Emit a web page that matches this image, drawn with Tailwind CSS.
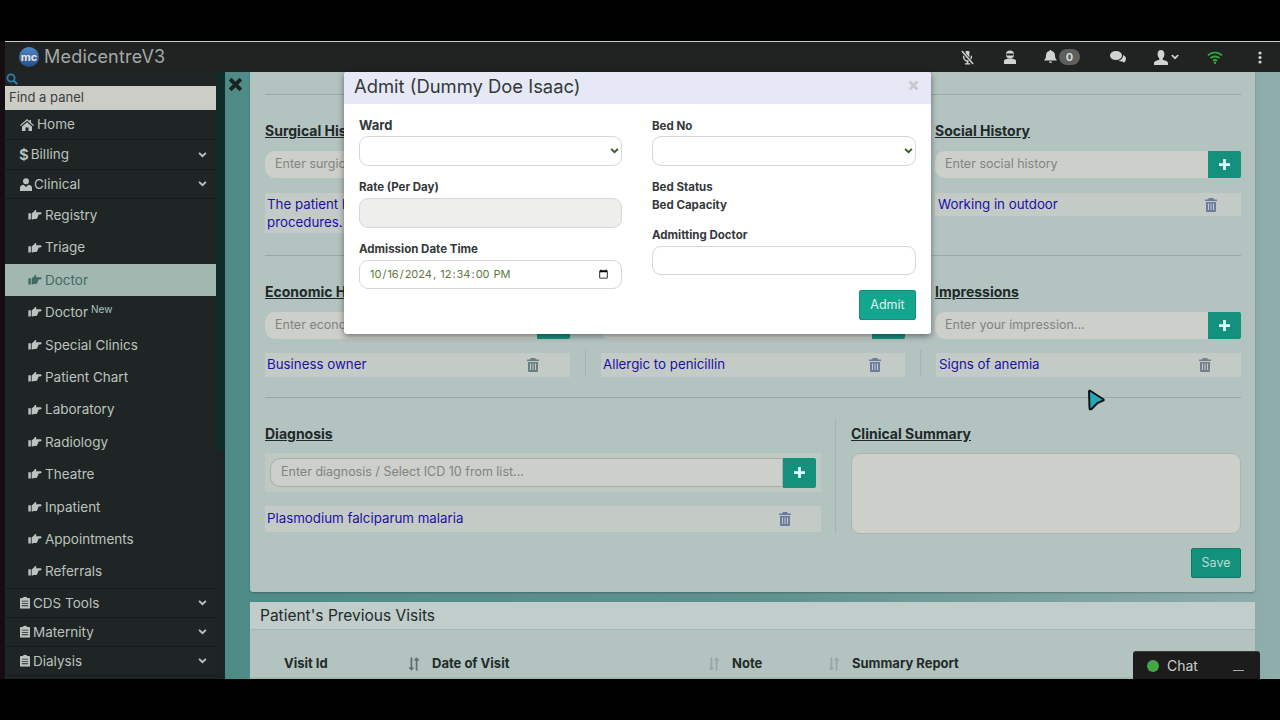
<!DOCTYPE html>
<html lang="en">
<head>
  <meta charset="UTF-8">
  <title>MedicentreV3 - Doctor</title>
  <script src="https://cdn.jsdelivr.net/npm/@tailwindcss/browser@4"></script>
</head>
<body class="bg-black">
<svg class="hidden">
  <symbol id="hand" viewBox="0 0 16 12"><path fill="currentColor" d="M0 4h3v7.500H0zM4 4.200 7 1.600c.5-.6.700-1.600 1.500-1.600.9 0 1.300.8 1 1.700l-.4 1h5.200c.9 0 1.600.6 1.600 1.300 0 .8-.7 1.300-1.600 1.300h-2.200c.3.900 0 1.600-.6 1.900.2.800-.1 1.500-.7 1.800.1 1-.5 1.700-1.500 1.700H6.200C5.300 11.700 4.700 11.300 4 11z"/></symbol>
  <symbol id="chev" viewBox="0 0 10 7"><path fill="none" stroke="currentColor" stroke-width="2.200" d="M1 1l4 4 4-4"/></symbol>
  <symbol id="clip" viewBox="0 0 11 14"><path fill="currentColor" fill-rule="evenodd" d="M1 2h2.500V1h1.200a1 1 0 0 1 1.600 0h1.200v1H10a1 1 0 0 1 1 1v10a1 1 0 0 1-1 1H1a1 1 0 0 1-1-1V3a1 1 0 0 1 1-1zM2 5v1h7V5zm0 2.500v1h7v-1zM2 10v1h7v-1z"/></symbol>
  <symbol id="trash" viewBox="0 0 12 14"><path fill="currentColor" fill-rule="evenodd" d="M4 0h4l1 1.500h3V3H0V1.500h3zM1 4h10v9a1 1 0 0 1-1 1H2a1 1 0 0 1-1-1zm2 1.500V12h1V5.500zm2.500 0V12h1V5.500zm2.500 0V12h1V5.500z"/></symbol>
  <symbol id="plus" viewBox="0 0 12 12"><path fill="currentColor" d="M4.500 0h3v4.500H12v3H7.500V12h-3V7.500H0v-3h4.500z"/></symbol>
  <symbol id="sort" viewBox="0 0 14 16"><path fill="currentColor" d="M3 0h2v12h2.500L4 16 .5 12H3zM9 16h2V4h2.500L10 0 6.500 4H9z"/></symbol>
</svg>

<div class="relative h-[720px] w-[1280px] overflow-hidden font-[Inter,sans-serif]">
  <div class="h-[41px] bg-black"></div>

  <div class="flex h-[638px] flex-col overflow-hidden bg-[#160c14] pl-[5px]">
    <!-- top bar -->
    <header class="flex h-[31px] shrink-0 items-center border-t border-[#c9c9c9] bg-[#202322]">
      <div class="ml-[14px] flex h-[20px] w-[20px] items-center justify-center rounded-full bg-linear-to-b from-[#4f86c8] to-[#23508f] text-[11px] font-bold leading-none text-[#ece4da]">mc</div>
      <span class="ml-[5px] text-[18px] leading-none tracking-[0.2px] text-[#a3aaa8]">MedicentreV3</span>
      <div class="ml-auto flex h-full items-center pr-[18px] text-[#cfd3d1]">
        <svg class="h-[15px] w-[15px]" viewBox="0 0 16 16"><path fill="currentColor" d="M6 1h4v7H6zM3 6h1.500c0 3 1.500 5 3.500 5s3.500-2 3.500-5H13c0 3.500-1.800 6-4.200 6.400V14h2v1.500H5.200V14h2v-1.600C4.800 12 3 9.500 3 6z"/><path stroke="#202322" stroke-width="3" d="M2 1l12 14"/><path stroke="currentColor" stroke-width="1.600" d="M2 1l12 14"/></svg>
        <svg class="ml-[28px] h-[15px] w-[14px]" viewBox="0 0 14 15"><circle cx="7" cy="4.500" r="4" fill="currentColor"/><path fill="#202322" d="M3.500 3.500h7v2h-7z"/><path fill="currentColor" d="M1 11c0-1.500 2-2.500 6-2.500s6 1 6 2.500v3H1z"/></svg>
        <svg class="ml-[27px] h-[14px] w-[13px]" viewBox="0 0 13 14"><path fill="currentColor" d="M6.500 0c.6 0 1 .4 1 1 2.300.4 3.500 2.200 3.500 4.500 0 2.800 1 3.800 2 5H0c1-1.200 2-2.200 2-5C2 3.200 3.200 1.400 5.500 1c0-.6.400-1 1-1zM5 11.500h3a1.500 1.500 0 0 1-3 0z"/></svg>
        <span class="ml-[2px] flex h-[16px] w-[21px] items-center justify-center rounded-full bg-[#5e5f5e] text-[11px] font-bold text-[#d7d9d7]">0</span>
        <svg class="ml-[30px] h-[13px] w-[16px]" viewBox="0 0 16 13"><ellipse cx="6" cy="4.500" rx="6" ry="4.500" fill="currentColor"/><path fill="currentColor" d="M8 10c3 .5 5 0 5.800 1.800 1-.6 2.200-2.200 2.200-4 0-2-1.200-3-2.800-3.800C13 7 11 9.500 8 10z"/></svg>
        <svg class="ml-[28px] h-[15px] w-[14px]" viewBox="0 0 14 15"><path fill="currentColor" d="M7 0c2 0 3.400 1.500 3.400 4s-1 3.800-1.700 4.500v1.300c1.500.6 5.300 1.200 5.300 3.200v2H0v-2c0-2 3.800-2.600 5.300-3.200V8.500C4.600 7.800 3.600 6.500 3.600 4S5 0 7 0z"/></svg>
        <svg class="ml-[3px] h-[6px] w-[8px]" viewBox="0 0 10 7"><use href="#chev"/></svg>
        <svg class="ml-[28px] h-[13px] w-[16px] text-[#2fae3a]" viewBox="0 0 16 13"><path fill="none" stroke="currentColor" stroke-width="1.700" d="M1 4.500c4-4 10-4 14 0M3.500 7.200c2.500-2.500 6.500-2.500 9 0M6 9.800c1.200-1.100 2.800-1.100 4 0"/><circle cx="8" cy="11.700" r="1.200" fill="currentColor"/></svg>
        <svg class="ml-[35px] h-[13px] w-[4px]" viewBox="0 0 4 13"><circle cx="2" cy="2" r="1.600" fill="currentColor"/><circle cx="2" cy="6.500" r="1.600" fill="currentColor"/><circle cx="2" cy="11" r="1.600" fill="currentColor"/></svg>
      </div>
    </header>

    <div class="flex min-h-0 flex-1">
      <!-- sidebar -->
      <aside class="w-[211px] shrink-0 bg-[#1f2524] text-[13.500px] text-[#bcc2bf]">
        <div class="flex h-[14px] items-center pl-[1px]">
          <svg class="h-[12px] w-[12px] text-[#2f7fa6]" viewBox="0 0 12 12"><circle cx="5" cy="5" r="3.600" fill="none" stroke="currentColor" stroke-width="1.800"/><path stroke="currentColor" stroke-width="2" d="M7.800 7.800l3.500 3.500"/></svg>
        </div>
        <div class="flex h-[24px] items-center bg-[#cdcdc8] pl-[4px] text-[13px] text-[#3c3e3c]">Find a panel</div>
        <div class="flex h-[30px] items-center border-b border-[#171c1b] pl-[15px]">
          <svg class="h-[12px] w-[14px]" viewBox="0 0 14 12"><path fill="currentColor" d="M7 0l2.500 2.200V1H11v2.600L14 6.200l-.8.9L7 1.700.8 7.100 0 6.200zM2 7.500l5-4.300 5 4.300V12H8.500V8.500h-3V12H2z"/></svg>
          <span class="ml-[3px]">Home</span>
        </div>
        <div class="flex h-[30px] items-center border-b border-[#171c1b] pl-[14px]">
          <span class="text-[15px] font-semibold leading-none">$</span><span class="ml-[2px]">Billing</span>
          <svg class="ml-auto mr-[9px] h-[6px] w-[9px]" viewBox="0 0 10 7"><use href="#chev"/></svg>
        </div>
        <div class="flex h-[29px] items-center border-b border-[#171c1b] pl-[15px]">
          <svg class="h-[13px] w-[12px]" viewBox="0 0 12 13"><circle cx="6" cy="3.200" r="3" fill="currentColor"/><path fill="currentColor" d="M0 13V9.500C0 8 2 7 3.500 6.800L6 9l2.500-2.200C10 7 12 8 12 9.500V13z"/></svg>
          <span class="ml-[2px]">Clinical</span>
          <svg class="ml-auto mr-[9px] h-[6px] w-[9px]" viewBox="0 0 10 7"><use href="#chev"/></svg>
        </div>
        <nav>
          <div class="flex h-[32.400px] items-center pl-[23px]"><svg class="h-[10px] w-[14px]"><use href="#hand"/></svg><span class="ml-[3px]">Registry</span></div>
          <div class="flex h-[32.400px] items-center pl-[23px]"><svg class="h-[10px] w-[14px]"><use href="#hand"/></svg><span class="ml-[3px]">Triage</span></div>
          <div class="flex h-[32.400px] items-center bg-[#a2b7af] pl-[23px] text-[#3f6b66]"><svg class="h-[10px] w-[14px]"><use href="#hand"/></svg><span class="ml-[3px]">Doctor</span></div>
          <div class="flex h-[32.400px] items-center pl-[23px]"><svg class="h-[10px] w-[14px]"><use href="#hand"/></svg><span class="ml-[3px]">Doctor</span><span class="mb-[6px] ml-[3px] text-[10px] text-[#a9c4c0]">New</span></div>
          <div class="flex h-[32.400px] items-center pl-[23px]"><svg class="h-[10px] w-[14px]"><use href="#hand"/></svg><span class="ml-[3px]">Special Clinics</span></div>
          <div class="flex h-[32.400px] items-center pl-[23px]"><svg class="h-[10px] w-[14px]"><use href="#hand"/></svg><span class="ml-[3px]">Patient Chart</span></div>
          <div class="flex h-[32.400px] items-center pl-[23px]"><svg class="h-[10px] w-[14px]"><use href="#hand"/></svg><span class="ml-[3px]">Laboratory</span></div>
          <div class="flex h-[32.400px] items-center pl-[23px]"><svg class="h-[10px] w-[14px]"><use href="#hand"/></svg><span class="ml-[3px]">Radiology</span></div>
          <div class="flex h-[32.400px] items-center pl-[23px]"><svg class="h-[10px] w-[14px]"><use href="#hand"/></svg><span class="ml-[3px]">Theatre</span></div>
          <div class="flex h-[32.400px] items-center pl-[23px]"><svg class="h-[10px] w-[14px]"><use href="#hand"/></svg><span class="ml-[3px]">Inpatient</span></div>
          <div class="flex h-[32.400px] items-center pl-[23px]"><svg class="h-[10px] w-[14px]"><use href="#hand"/></svg><span class="ml-[3px]">Appointments</span></div>
          <div class="flex h-[32.400px] items-center pl-[23px]"><svg class="h-[10px] w-[14px]"><use href="#hand"/></svg><span class="ml-[3px]">Referrals</span></div>
        </nav>
        <div class="flex h-[30px] items-center border-y border-[#171c1b] pl-[15px]">
          <svg class="h-[13px] w-[10px]" viewBox="0 0 11 14"><use href="#clip"/></svg><span class="ml-[3px]">CDS Tools</span>
          <svg class="ml-auto mr-[9px] h-[6px] w-[9px]" viewBox="0 0 10 7"><use href="#chev"/></svg>
        </div>
        <div class="flex h-[29px] items-center border-b border-[#171c1b] pl-[15px]">
          <svg class="h-[13px] w-[10px]" viewBox="0 0 11 14"><use href="#clip"/></svg><span class="ml-[3px]">Maternity</span>
          <svg class="ml-auto mr-[9px] h-[6px] w-[9px]" viewBox="0 0 10 7"><use href="#chev"/></svg>
        </div>
        <div class="flex h-[29px] items-center border-b border-[#171c1b] pl-[15px]">
          <svg class="h-[13px] w-[10px]" viewBox="0 0 11 14"><use href="#clip"/></svg><span class="ml-[3px]">Dialysis</span>
          <svg class="ml-auto mr-[9px] h-[6px] w-[9px]" viewBox="0 0 10 7"><use href="#chev"/></svg>
        </div>
      </aside>

      <div class="flex w-[9px] shrink-0 flex-col">
        <div class="h-[378px] bg-[#0f2c29]"></div>
        <div class="flex-1 bg-[#1c2322]"></div>
      </div>

      <!-- page -->
      <main class="flex min-w-0 flex-1 bg-linear-to-r from-[#4e8b87] via-[#5f918e] to-[#90aeab]">
        <div class="w-[25px] shrink-0 pt-[5px] pl-[3px]">
          <svg class="h-[15px] w-[15px] text-[#1a2423]" viewBox="0 0 14 14"><path fill="none" stroke="currentColor" stroke-width="3.600" d="M2 2l10 10M12 2L2 12"/></svg>
        </div>
        <div class="w-[1005px] shrink-0">
          <section class="h-[520px] rounded-b-[3px] bg-[#b3c3bf] pl-[15px] pr-[14px] shadow-[0_1px_2px_rgba(0,0,0,0.25)]">
            <div class="h-[23px] border-b border-[#97aaa6]"></div>

            <div class="grid grid-cols-[320px_335px_321px]">
              <div class="pr-[15px]">
                <h3 class="mt-[26px] h-[20px] text-[14px] font-bold leading-[20px] text-[#20292a] underline">Surgical History</h3>
                <div class="mt-[10px] flex h-[27px]">
                  <div class="flex flex-1 items-center rounded-l-[10px] bg-[#cdcfca] pl-[10px] text-[12.500px] text-[#7e8583]">Enter surgical history</div>
                  <div class="flex w-[33px] items-center justify-center rounded-r-[2px] bg-[#14917d] text-[#dff]"><svg class="h-[11px] w-[11px]"><use href="#plus"/></svg></div>
                </div>
                <div class="mt-[15px] h-[40px] bg-[#c4cbc6] px-[2px] pt-[2px] text-[13.300px] leading-[18px] text-[#1d0fa6]">The patient has no prior<br>procedures.</div>
              </div>
              <div class="px-[15px]"></div>
              <div class="pl-[15px]">
                <h3 class="mt-[26px] h-[20px] text-[14px] font-bold leading-[20px] text-[#20292a] underline">Social History</h3>
                <div class="mt-[10px] flex h-[27px]">
                  <div class="flex flex-1 items-center rounded-l-[10px] bg-[#cdcfca] pl-[10px] text-[12.500px] text-[#7e8583]">Enter social history</div>
                  <div class="flex w-[33px] items-center justify-center rounded-r-[2px] bg-[#14917d] text-[#dff]"><svg class="h-[11px] w-[11px]"><use href="#plus"/></svg></div>
                </div>
                <div class="mt-[15px] flex h-[23px] items-center justify-between bg-[#c4cbc6] pl-[3px] pr-[24px] text-[13.300px] text-[#1d0fa6]">Working in outdoor<svg class="h-[14px] w-[12px] text-[#6d7aa0]" viewBox="0 0 12 14"><use href="#trash"/></svg></div>
              </div>
            </div>
            <div class="mt-[22px] h-px bg-[#97aaa6]"></div>

            <div class="grid grid-cols-[320px_335px_321px]">
              <div class="pr-[15px]">
                <h3 class="mt-[26px] h-[20px] text-[14px] font-bold leading-[20px] text-[#20292a] underline">Economic History</h3>
                <div class="mt-[10px] flex h-[27px]">
                  <div class="flex flex-1 items-center rounded-l-[10px] bg-[#cdcfca] pl-[10px] text-[12.500px] text-[#7e8583]">Enter economic history</div>
                  <div class="flex w-[33px] items-center justify-center rounded-r-[2px] bg-[#14917d]"></div>
                </div>
                <div class="mt-[14px] flex h-[24px] items-center justify-between bg-[#c4cbc6] pl-[2px] pr-[31px] text-[13.300px] text-[#1d0fa6]">Business owner<svg class="h-[14px] w-[12px] text-[#66807f]" viewBox="0 0 12 14"><use href="#trash"/></svg></div>
              </div>
              <div class="px-[15px]">
                <div class="mt-[46px] h-[10px]"></div>
                <div class="flex h-[27px]">
                  <div class="flex-1 rounded-l-[10px] bg-[#cdcfca]"></div>
                  <div class="w-[33px] rounded-r-[2px] bg-[#14917d]"></div>
                </div>
                <div class="-ml-[15px] mt-[11px] border-l border-[#a3b5b1] pl-[15px] pt-[3px]">
                  <div class="flex h-[24px] items-center justify-between bg-[#c4cbc6] pl-[2px] pr-[24px] text-[13.300px] text-[#1d0fa6]">Allergic to penicillin<svg class="h-[14px] w-[12px] text-[#6d7aa0]" viewBox="0 0 12 14"><use href="#trash"/></svg></div>
                </div>
              </div>
              <div class="pl-[15px]">
                <h3 class="mt-[26px] h-[20px] text-[14px] font-bold leading-[20px] text-[#20292a] underline">Impressions</h3>
                <div class="mt-[10px] flex h-[27px]">
                  <div class="flex flex-1 items-center rounded-l-[10px] bg-[#cdcfca] pl-[10px] text-[12.500px] text-[#7e8583]">Enter your impression...</div>
                  <div class="flex w-[33px] items-center justify-center rounded-r-[2px] bg-[#14917d] text-[#dff]"><svg class="h-[11px] w-[11px]"><use href="#plus"/></svg></div>
                </div>
                <div class="-ml-[15px] mt-[11px] border-l border-[#a3b5b1] pl-[15px] pt-[3px]">
                  <div class="flex h-[24px] items-center justify-between bg-[#c4cbc6] pl-[3px] pr-[30px] text-[13.300px] text-[#1d0fa6]">Signs of anemia<svg class="h-[14px] w-[12px] text-[#777f8c]" viewBox="0 0 12 14"><use href="#trash"/></svg></div>
                </div>
              </div>
            </div>
            <div class="mt-[20px] h-px bg-[#97aaa6]"></div>

            <div class="mt-[20px] flex h-[115px]">
              <div class="w-[571px] border-r border-[#a3b5b1] pr-[14px]">
                <h3 class="mt-[6px] h-[20px] text-[14px] font-bold leading-[20px] text-[#20292a] underline">Diagnosis</h3>
                <div class="mt-[9px] flex h-[39px] items-center bg-[#bfc9c4] pl-[5px] pr-[5px]">
                  <div class="flex h-[29px] flex-1 items-center rounded-l-[10px] border border-[#a9aea6] bg-[#cdcfca] pl-[10px] text-[12.500px] text-[#7e8583]">Enter diagnosis / Select ICD 10 from list...</div>
                  <div class="flex h-[30px] w-[33px] items-center justify-center rounded-r-[2px] bg-[#14917d] text-[#dff]"><svg class="h-[11px] w-[11px]"><use href="#plus"/></svg></div>
                </div>
                <div class="mt-[14px] flex h-[26px] items-center justify-between bg-[#c4cbc6] pl-[2px] pr-[30px] text-[13.300px] text-[#1d0fa6]">Plasmodium falciparum malaria<svg class="h-[14px] w-[12px] text-[#6d7aa0]" viewBox="0 0 12 14"><use href="#trash"/></svg></div>
              </div>
              <div class="flex-1 pl-[15px]">
                <h3 class="mt-[6px] h-[20px] text-[14px] font-bold leading-[20px] text-[#20292a] underline">Clinical Summary</h3>
                <div class="mt-[9px] h-[81px] rounded-[9px] border border-[#adb5af] bg-[#cdcfca]"></div>
              </div>
            </div>
            <div class="mt-[15px] flex justify-end">
              <button class="flex h-[30px] w-[50px] items-center justify-center rounded-[2px] border border-[#127866] bg-[#14917d] text-[12.500px] text-[#b9dcd4]">Save</button>
            </div>
          </section>

          <section class="mt-[10px] h-[120px] rounded-t-[3px] bg-[#b3c3bf]">
            <div class="flex h-[28px] items-center border-b border-[#a4b8b4] bg-[#c0cdcb] pl-[10px] text-[15.500px] text-[#232a2a]">Patient's Previous Visits</div>
            <div class="mt-[21px] flex h-[28px] items-center border-b-2 border-[#a7b5b1] pl-[34px] text-[13px] font-bold text-[#232b2a]">
              <span class="w-[124px]">Visit Id</span>
              <svg class="h-[14px] w-[12px] text-[#5f6d6b]" viewBox="0 0 14 16"><use href="#sort"/></svg>
              <span class="ml-[12px] w-[276px]">Date of Visit</span>
              <svg class="h-[14px] w-[12px] text-[#97a7a4]" viewBox="0 0 14 16"><use href="#sort"/></svg>
              <span class="ml-[12px] w-[96px]">Note</span>
              <svg class="h-[14px] w-[12px] text-[#97a7a4]" viewBox="0 0 14 16"><use href="#sort"/></svg>
              <span class="ml-[12px]">Summary Report</span>
            </div>
          </section>
        </div>
      </main>
    </div>
  </div>

  <!-- admit modal -->
  <div class="absolute left-[344px] top-[72px] h-[262px] w-[587px] overflow-hidden rounded-[3px] bg-white shadow-[0_2px_6px_rgba(0,0,0,0.45)]">
    <div class="flex h-[32px] items-center justify-between bg-[#e6e8f6] pb-[3px] pl-[10px] pr-[12px]">
      <span class="text-[18.400px] text-[#33393a]">Admit (Dummy Doe Isaac)</span>
      <svg class="mb-[3px] h-[11px] w-[11px] text-[#c7c9cf]" viewBox="0 0 14 14"><path fill="none" stroke="currentColor" stroke-width="3.600" d="M2 2l10 10M12 2L2 12"/></svg>
    </div>
    <div class="grid grid-cols-[263px_264px] gap-x-[30px] pl-[15px]">
      <div>
        <label class="mt-[11px] block h-[20px] text-[13px] font-bold leading-[20px] text-[#33383a]">Ward</label>
        <div class="relative mt-[1px]">
          <select class="block h-[30px] w-full appearance-none rounded-[9px] border border-[#d5d8d4] bg-white"></select>
          <svg class="absolute right-[3px] top-[12px] h-[6px] w-[9px] text-[#3a5a14]" viewBox="0 0 10 7"><use href="#chev"/></svg>
        </div>
        <label class="mt-[14px] block h-[14px] text-[11.500px] font-bold leading-[14px] text-[#33383a]">Rate (Per Day)</label>
        <input disabled class="mt-[4px] block h-[30px] w-full rounded-[9px] border border-[#d5d8d4] bg-[#eeeeec]">
        <label class="mt-[14px] block h-[14px] text-[11.500px] font-bold leading-[14px] text-[#33383a]">Admission Date Time</label>
        <input type="datetime-local" step="1" value="2024-10-16T12:34:00" class="mt-[4px] block h-[29px] w-full rounded-[9px] border border-[#d5d8d4] bg-white pl-[9px] pr-[10px] text-[11px] text-[#5b7a3c]">
      </div>
      <div>
        <label class="mt-[15px] block h-[14px] text-[11.500px] font-bold leading-[14px] text-[#33383a]">Bed No</label>
        <div class="relative mt-[3px]">
          <select class="block h-[30px] w-full appearance-none rounded-[9px] border border-[#d5d8d4] bg-white"></select>
          <svg class="absolute right-[3px] top-[12px] h-[6px] w-[9px] text-[#3a5a14]" viewBox="0 0 10 7"><use href="#chev"/></svg>
        </div>
        <p class="mt-[14px] h-[14px] text-[11.500px] font-bold leading-[14px] text-[#33383a]">Bed Status</p>
        <p class="mt-[4px] h-[14px] text-[11.500px] font-bold leading-[14px] text-[#33383a]">Bed Capacity</p>
        <label class="mt-[16px] block h-[14px] text-[11.500px] font-bold leading-[14px] text-[#33383a]">Admitting Doctor</label>
        <input class="mt-[4px] block h-[29px] w-full rounded-[9px] border border-[#d5d8d4] bg-white">
        <div class="mt-[15px] flex justify-end">
          <button class="flex h-[30px] w-[57px] items-center justify-center rounded-[2px] border border-[#11907c] bg-[#13a58e] text-[12.500px] text-[#dff3ee]">Admit</button>
        </div>
      </div>
    </div>
  </div>

  <!-- screen recorder cursor -->
  <svg class="absolute left-[1086px] top-[389px] h-[22px] w-[19px]" viewBox="0 0 19 22"><path fill="#25a7b8" stroke="#0b1416" stroke-width="2" stroke-linejoin="round" d="M3 2.500Q3 1 4.500 2L17 10Q18.500 11 17 11.700L11.500 14 5.500 20Q3.500 21 3.500 19Z"/></svg>

  <!-- chat widget -->
  <div class="absolute left-[1133px] top-[651px] flex h-[28px] w-[127px] items-center rounded-t-[3px] border-t border-[#3a3a3a] bg-[#1c1c1c] pl-[14px] pr-[16px] text-[14px] text-[#c9cfcc]">
    <span class="h-[12px] w-[12px] rounded-full bg-[#45a644]"></span>
    <span class="ml-[8px]">Chat</span>
    <span class="ml-auto mt-[9px] h-px w-[11px] bg-[#a7aaa8]"></span>
  </div>
</div>
</body>
</html>
